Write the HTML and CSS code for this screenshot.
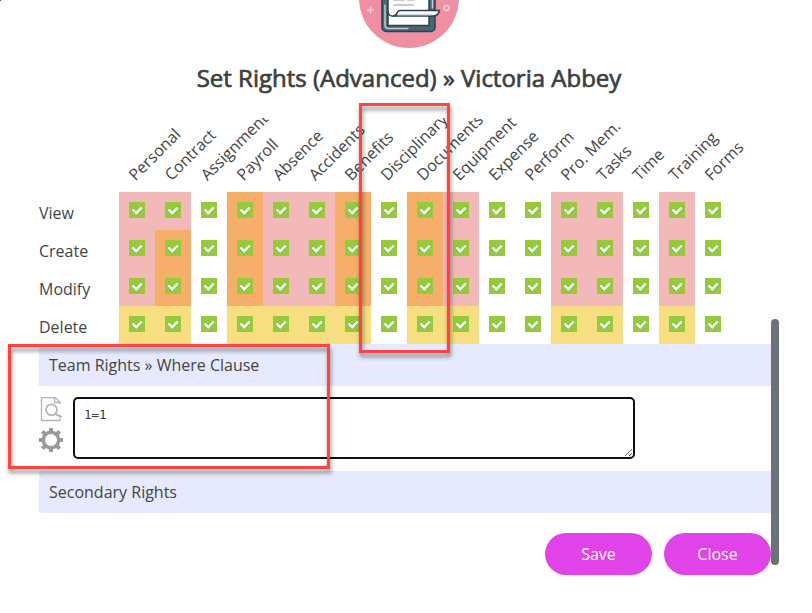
FILE: index.html
```html
<!DOCTYPE html>
<html lang="en">
  <head>
    <meta charset="utf-8" />
    <meta name="viewport" content="width=device-width, initial-scale=1" />
    <title>Set Rights (Advanced)</title>
    <link rel="stylesheet" href="styles.css">
  </head>
  <body>
    <svg class="logo" width="100" height="48" viewBox="0 0 100 48">
      <circle cx="50" cy="-2" r="50" fill="#ee90a2"/>
      <!-- clipboard -->
      <rect x="23" y="-20" width="53" height="51.500" rx="4" fill="#4b6573" stroke="#2b414f" stroke-width="1.500"/>
      <path d="M26 5v20q0 3.500 3.500 3.500H49M73.500 0v8" fill="none" stroke="#c3ccd2" stroke-width="1.500" stroke-linecap="round"/>
      <path d="M29 -5H70V25.500H29z" fill="#fff" stroke="#2b414f" stroke-width="1.500"/>
      <path d="M35 0h10M49 0h6M35 5h19" stroke="#c9c9c9" stroke-width="1.800" stroke-linecap="round"/>
      <path d="M36 16q-7 1-7-5M34 16q3 0 4-3 1-2.500 3-2.500H80.500q-1 5-6 5.500z" fill="#fff" stroke="#2b414f" stroke-width="1.500" stroke-linejoin="round"/>
      <path d="M39 14.500h34" stroke="#d3d8dc" stroke-width="1.500"/>
      <path d="M8 10h7M11.500 6.500v7" stroke="#f9cdd5" stroke-width="1.500"/>
      <circle cx="87.500" cy="8" r="2.500" fill="none" stroke="#f9cdd5" stroke-width="1.500"/>
    </svg>

    <h1>Set Rights (Advanced) » Victoria Abbey</h1>

    <main class="panel">
      <div class="rights" id="rights"></div>

      <h2 class="bar">Team Rights » Where Clause</h2>
      <div class="clause">
        <div class="tools">
          <svg width="24" height="26" viewBox="0 1 24 26" fill="none" stroke="#b4b4b4">
            <path d="M21 8V6l-5-4.500H2.500v23H21V22M15.500 1.500V6.500H21" stroke-width="1.300"/>
            <circle cx="12.500" cy="13.800" r="5.500" stroke-width="1.700"/>
            <path d="M16.500 18l6 3" stroke-width="2"/>
          </svg>
          <svg width="24" height="24" viewBox="-12 -12 24 24" fill="none" stroke="#999">
            <circle r="7.700" stroke-width="3.400"/>
            <path d="M0 -8.500V-12M0 8.500V12M8.500 0H12M-8.500 0H-12M6 6l2.600 2.600M-6 6l-2.600 2.600M6 -6l2.600 -2.600M-6 -6l-2.600 -2.600" stroke-width="4"/>
          </svg>
        </div>
        <textarea spellcheck="false">1=1</textarea>
      </div>
      <h2 class="bar">Secondary Rights</h2>

      <div class="buttons">
        <button type="button">Save</button>
        <button type="button">Close</button>
      </div>
    </main>

    <div class="scrollbar"></div>
    <div class="corner"></div>
    <div class="marker marker-columns"></div>
    <div class="marker marker-clause"></div>

    <script src="rights.js"></script>
  </body>
</html>
```
FILE: styles.css
```css
body {
  position: relative;
  width: 812px;
  height: 613px;
  margin: 0;
  overflow: hidden;
  background: #fff;
  color: #444;
  font-family: "Open Sans", sans-serif;
  font-size: 16px;
}

.logo {
  display: block;
  margin-left: 359px;
}

h1 {
  width: 740px;
  height: 34px;
  margin: 13px 0 23px 39px;
  color: #3c3f3f;
  font-size: 24px;
  font-weight: 400;
  line-height: 34px;
  text-align: center;
  white-space: nowrap;
  -webkit-text-stroke: 0.7px #3c3f3f;
}

.panel {
  width: 732px;
  margin-left: 39px;
}

/* label column + 17 modules */
.rights {
  display: grid;
  grid-template-columns: 80px repeat(17, 36px);
  grid-template-rows: 74px repeat(4, 38px);
  clip-path: inset(0 -40px 0 0);
}

.head span {
  display: block;
  width: 20px;
  line-height: 22px;
  white-space: nowrap;
  transform: translate(20px, 45px) rotate(-45deg);
  transform-origin: 0 100%;
}

.label {
  padding-top: 10px;
  line-height: 22px;
}

.cell {
  padding: 10px 0 0 10px;
}

.cell svg {
  display: block;
}

.pink {
  background: #f3b9b9;
}

.orange {
  background: #f6af6b;
}

.yellow {
  background: #f7de80;
}

.bar {
  height: 42px;
  margin: 0;
  padding-left: 10px;
  background: #e7eafe;
  font-size: 16px;
  font-weight: 400;
  line-height: 42px;
}

.clause {
  display: flex;
  height: 74px;
  padding-top: 11px;
}

.tools {
  display: flex;
  flex-direction: column;
  gap: 5px;
  width: 34px;
}

textarea {
  box-sizing: border-box;
  width: 562px;
  height: 62px;
  margin: 0;
  padding: 8px 9px;
  border: 2px solid #101010;
  border-radius: 5px;
  color: #2f3c48;
  font: 12.5px/16px "DejaVu Sans Mono", monospace;
}

.buttons {
  display: flex;
  justify-content: flex-end;
  gap: 12px;
  margin-top: 20px;
}

button {
  width: 107px;
  height: 42px;
  padding: 0;
  border: 0;
  border-radius: 21px;
  background: #e043e7;
  color: #fff;
  font: 16px "Open Sans", sans-serif;
}

.scrollbar {
  position: absolute;
  left: 771px;
  top: 319px;
  width: 8px;
  height: 246px;
  border-radius: 4px;
  background: #6b7278;
}

.corner {
  position: absolute;
  left: 0;
  top: 0;
  width: 1px;
  height: 1px;
  background: #3d4f86;
}

/* red callouts over the form */
.marker {
  position: absolute;
  box-sizing: border-box;
  border: 3px solid #ff4343;
  filter: drop-shadow(1px 4px 2px rgba(0, 0, 0, 0.45));
}

.marker-columns {
  left: 359px;
  top: 103px;
  width: 91px;
  height: 250px;
}

.marker-clause {
  left: 8px;
  top: 344px;
  width: 322px;
  height: 125px;
}
```
FILE: rights.js
```js
const modules = ['Personal', 'Contract', 'Assignment', 'Payroll', 'Absence', 'Accidents',
  'Benefits', 'Disciplinary', 'Documents', 'Equipment', 'Expense', 'Perform',
  'Pro. Mem.', 'Tasks', 'Time', 'Training', 'Forms']

// one letter per module: p pink, o orange, y yellow, - none
const rows = {
  View: 'pp-oppo-op--pp-p-',
  Create: 'po-oppo-op--pp-p-',
  Modify: 'po-oppo-op--pp-p-',
  Delete: 'yy-yyyy-yy--yy-y-'
}
const colours = { p: 'pink', o: 'orange', y: 'yellow', '-': '' }

const check = `<svg width="16" height="16" viewBox="0 0 16 16">
  <rect width="16" height="16" fill="#97c93c"/>
  <path d="M3.500 7.800l3.700 3.700 5.500-5.500" fill="none" stroke="#5fc24a" stroke-width="3.200"/>
  <path d="M3.500 7.500l3.700 3.700 5.500-5.500" fill="none" stroke="#fff" stroke-width="2.400"/>
</svg>`

let html = '<div></div>'
modules.forEach(name => {
  html += `<div class="head"><span>${name}</span></div>`
})

for (const label in rows) {
  html += `<div class="label">${label}</div>`
  for (const c of rows[label]) {
    html += `<div class="cell ${colours[c]}">${check}</div>`
  }
}

document.getElementById('rights').innerHTML = html
```
